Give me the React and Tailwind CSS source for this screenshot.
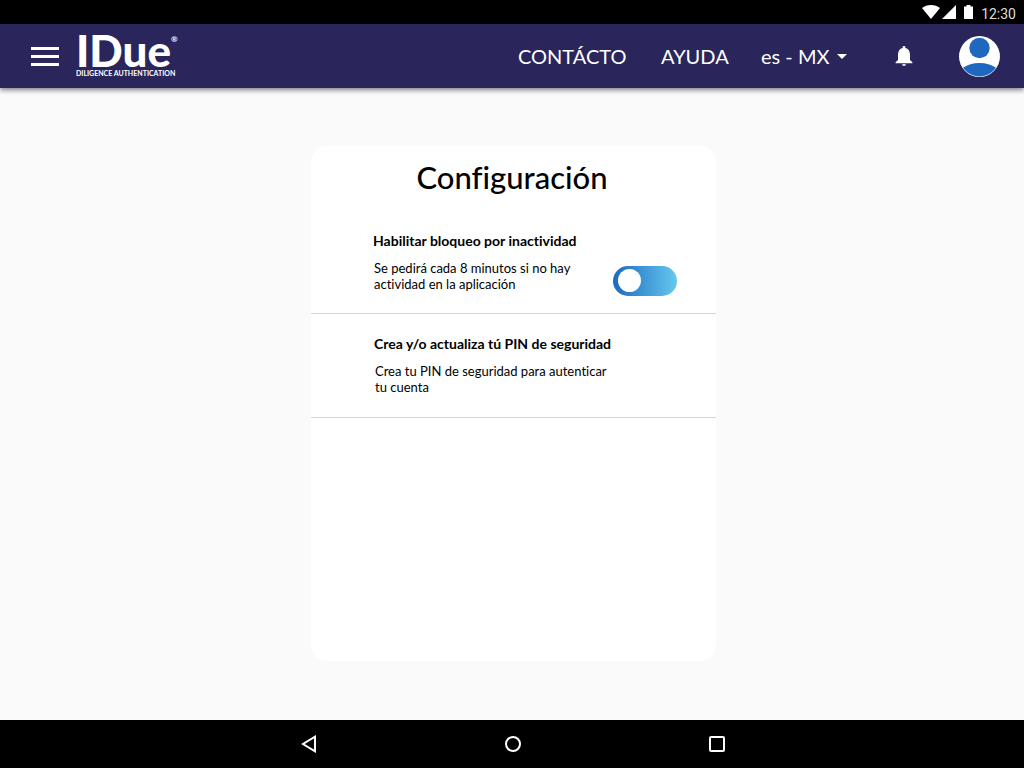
import React, { useState } from 'react';

// Settings screen: Android-style status and navigation bars around the app
// header and a single settings card.

function StatusBar() {
  return (
    <div className="flex h-6 items-center justify-end bg-black pr-2 text-white">
      <svg width="18" height="14" viewBox="0 0 18 14" fill="currentColor" aria-hidden="true">
        <path d="M9 14 0 3C2.500 1 5.500 0 9 0s6.500 1 9 3z" />
      </svg>
      <svg width="14" height="14" viewBox="0 0 14 14" fill="currentColor" className="ml-0.5" aria-hidden="true">
        <path d="M0 14 14 0v14z" />
      </svg>
      <svg width="9" height="14" viewBox="0 0 9 14" fill="currentColor" className="ml-2" aria-hidden="true">
        <path d="M0 1.500h2.500V0h4v1.500H9V14H0z" />
      </svg>
      <span className="ml-2 pt-1 font-[Roboto,sans-serif] text-sm leading-5 text-[#dcdcdc]">12:30</span>
    </div>
  );
}

function Logo() {
  return (
    <a href="#inicio" aria-label="IDue Diligence Authentication" className="ml-[17px] flex w-[100px] flex-col">
      <span className="flex items-start">
        <span className="text-[44px] font-black leading-[30px]">IDue</span>
        <span className="text-[8px] font-bold leading-[8px]">®</span>
      </span>
      <span className="mt-1 whitespace-nowrap text-[7px] font-bold leading-[8px]">DILIGENCE AUTHENTICATION</span>
    </a>
  );
}

function Header() {
  const [lang, setLang] = useState('es-MX');

  return (
    <header className="z-10 flex h-16 items-center bg-[#2a255b] pl-[31px] pr-6 text-white shadow-[0_2px_5px_rgba(0,0,0,0.5)]">
      <button type="button" aria-label="Abrir menú" className="flex w-7 flex-col gap-[5px]">
        <span className="h-[3px] w-full bg-white" />
        <span className="h-[3px] w-full bg-white" />
        <span className="h-[3px] w-full bg-white" />
      </button>
      <Logo />
      <nav className="ml-auto flex items-center text-xl leading-6">
        <a href="#contacto" className="w-[107px]">CONTÁCTO</a>
        <a href="#ayuda" className="ml-9 w-[66px]">AYUDA</a>
        <div className="relative ml-[34px] w-[86px]">
          <select
            aria-label="Idioma"
            value={lang}
            onChange={(e) => setLang(e.target.value)}
            className="block w-full appearance-none bg-transparent text-white"
          >
            <option value="es-MX">es - MX</option>
            <option value="en-US">en - US</option>
          </select>
          <svg
            width="10"
            height="5"
            viewBox="0 0 10 5"
            fill="currentColor"
            className="pointer-events-none absolute right-0 top-2.5"
            aria-hidden="true"
          >
            <path d="M0 0h10L5 5z" />
          </svg>
        </div>
      </nav>
      <button type="button" aria-label="Notificaciones" className="ml-12">
        <svg width="18" height="20" viewBox="0 0 18 20" fill="currentColor" aria-hidden="true">
          <path d="M9 20a2 2 0 0 0 2-1.800H7A2 2 0 0 0 9 20zM15 14V8.500c0-3.200-1.700-5.700-4.600-6.400v-.7a1.400 1.400 0 0 0-2.800 0v.7C4.700 2.800 3 5.300 3 8.500V14L.6 16.200v1h16.800v-1z" />
        </svg>
      </button>
      <button type="button" aria-label="Perfil" className="ml-[46px]">
        <svg width="41" height="41" viewBox="0 0 41 41" aria-hidden="true">
          <circle cx="20.5" cy="20.5" r="20.5" fill="#fff" />
          <circle cx="20.5" cy="12" r="10.200" fill="#1e69bf" />
          <path d="M4 31.800C8.500 28.700 14 27 20.500 27S32.500 28.700 37 31.800C33.400 37 27.500 40.400 20.500 40.400S7.600 37 4 31.800z" fill="#1e69bf" />
        </svg>
      </button>
    </header>
  );
}

function SettingsCard() {
  const [locked, setLocked] = useState(false);

  return (
    <section className="min-h-[515px] w-full max-w-[405px] rounded-2xl bg-white">
      <h1 className="pr-[3px] pt-3 text-center text-[31px] font-medium leading-[38px]">Configuración</h1>

      <div className="mt-9 flex h-[82px] items-start justify-between border-b border-[#d4d4d4] pl-[62px] pr-[39px]">
        <label htmlFor="bloqueo" className="w-[220px]">
          <span className="block whitespace-nowrap text-sm font-bold leading-[18px]">
            Habilitar bloqueo por inactividad
          </span>
          <span className="mt-2.5 block whitespace-nowrap pl-px text-[13px] leading-4">
            Se pedirá cada 8 minutos si no hay
            <br />
            actividad en la aplicación
          </span>
        </label>
        <input
          id="bloqueo"
          type="checkbox"
          role="switch"
          checked={locked}
          onChange={(e) => setLocked(e.target.checked)}
          className="mt-[34px] flex h-[30px] w-16 shrink-0 cursor-pointer appearance-none items-center rounded-full bg-linear-to-r from-[#1e69bf] to-[#66c8ee] px-[5px] before:size-[23px] before:rounded-full before:bg-white checked:justify-end"
        />
      </div>

      <a href="#pin" className="block h-[104px] border-b border-[#d4d4d4] pl-[63px] pt-[21px]">
        <span className="block text-sm font-bold leading-[18px]">Crea y/o actualiza tú PIN de seguridad</span>
        <span className="mt-2.5 block whitespace-nowrap pl-px text-[13px] leading-4">
          Crea tu PIN de seguridad para autenticar
          <br />
          tu cuenta
        </span>
      </a>
    </section>
  );
}

function NavigationBar() {
  return (
    <div className="flex h-12 items-center justify-center gap-[156px] bg-black pl-0.5 text-white">
      <button type="button" aria-label="Atrás" className="flex size-12 items-center justify-center">
        <svg width="16" height="18" viewBox="0 0 16 18" fill="none" stroke="currentColor" strokeWidth="2" aria-hidden="true">
          <path d="M14 1.700v14.600L2 9z" />
        </svg>
      </button>
      <button type="button" aria-label="Inicio" className="flex size-12 items-center justify-center">
        <span className="size-4 rounded-full border-2" />
      </button>
      <button type="button" aria-label="Recientes" className="flex size-12 items-center justify-center">
        <span className="size-4 rounded-xs border-2" />
      </button>
    </div>
  );
}

export default function App() {
  return (
    <div className="flex min-h-screen flex-col bg-[#fafafa] font-[Lato,sans-serif] text-black [font-variant-ligatures:none]">
      <StatusBar />
      <Header />
      <main className="flex flex-1 items-center justify-center pb-0.5 pl-[3px]">
        <SettingsCard />
      </main>
      <NavigationBar />
    </div>
  );
}
